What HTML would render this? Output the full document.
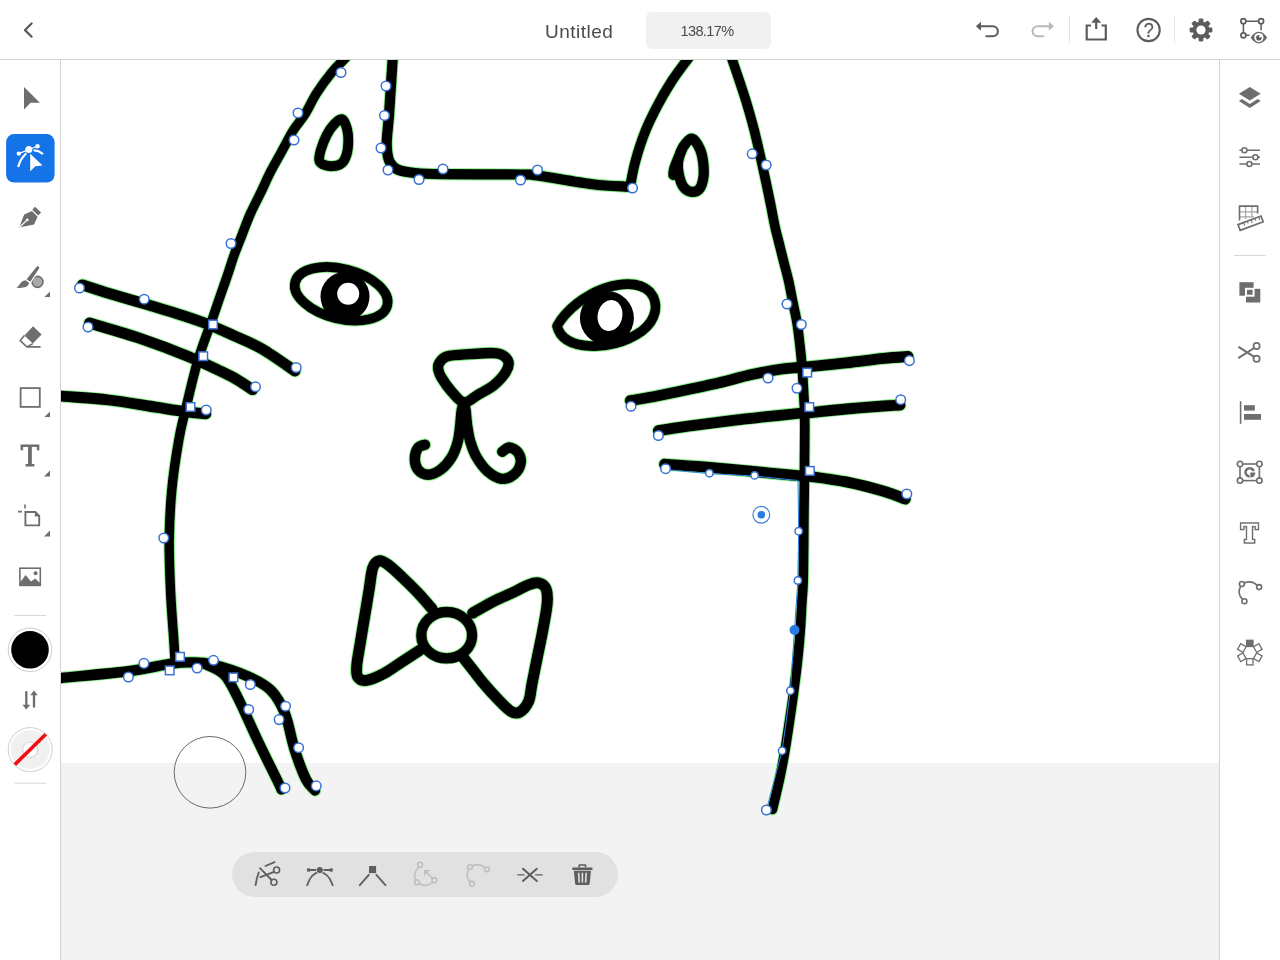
<!DOCTYPE html>
<html lang="en">
<head>
<meta charset="utf-8">
<title>Untitled</title>
<style>
  html, body { margin: 0; padding: 0; }
  body { width: 1280px; height: 960px; overflow: hidden; background: #fff; position: relative;
         font-family: "Liberation Sans", sans-serif; color: #4b4b4b; }
  .topbar { position: absolute; left: 0; top: 0; width: 1280px; height: 59px; background: #fff;
            border-bottom: 1px solid #d3d3d3; z-index: 5; }
  .title { position: absolute; left: 545.3px; top: 19.8px; font-size: 19px; line-height: 24px; letter-spacing: 0.5px; color: #4b4b4b; }
  .zoom { position: absolute; left: 645.7px; top: 11.6px; width: 122px; padding-right: 3px; height: 37.2px; border-radius: 6px;
          background: #f1f1f1; font-size: 14.5px; line-height: 38px; text-align: center; letter-spacing: -0.6px; color: #4b4b4b; }
  .lefttools { position: absolute; left: 0; top: 60px; width: 60px; height: 900px; background: #fff;
               border-right: 1px solid #d3d3d3; z-index: 4; }
  .rightpanel { position: absolute; left: 1219px; top: 60px; width: 60px; height: 900px; background: #fff;
               border-left: 1px solid #d3d3d3; z-index: 4; }
  .canvas { position: absolute; left: 61px; top: 60px; width: 1158px; height: 900px; background: #f3f3f3; overflow: hidden; z-index: 1; }
  .artboard { position: absolute; left: 0; top: 0; width: 1158px; height: 703px; background: #fff; }
  .layer { position: absolute; left: 0; top: 0; }
  .ctxbar { position: absolute; left: 232px; top: 852px; width: 385.5px; height: 45px; border-radius: 23px; background: #e1e1e1; z-index: 3; }
  svg { display: block; overflow: visible; }
  .ico { position: absolute; left: 0; top: 0; z-index: 6; pointer-events: none; will-change: transform; }
  .title, .zoom { will-change: transform; }
</style>
</head>
<body>

<div class="canvas">
  <div class="artboard"></div>
  <svg class="layer" width="1158" height="900" viewBox="61 60 1158 900">
    <g fill="none" stroke="#84ee84" stroke-linecap="round" stroke-linejoin="round">
<path d="M355.0 48.0C353.1 50.0 347.1 56.2 343.3 60.2C339.5 64.2 336.5 66.5 332.0 72.1C327.5 77.6 320.8 86.6 316.4 93.5C312.0 100.4 309.2 107.5 305.4 113.6C301.6 119.7 297.4 123.8 293.5 130.0C289.6 136.2 285.9 143.9 282.1 150.8C278.3 157.8 274.2 164.8 270.6 171.7C267.1 178.6 264.1 185.6 260.8 192.5C257.5 199.4 253.7 206.4 250.6 213.3C247.5 220.2 245.0 227.2 242.3 234.2C239.6 241.1 236.7 248.1 234.2 255.0C231.7 261.9 229.7 268.9 227.3 275.8C224.9 282.8 222.4 289.8 220.0 296.7C217.6 303.6 216.6 306.9 212.9 317.5C209.2 328.1 202.6 344.6 198.0 360.0C193.4 375.4 188.7 396.7 185.5 410.0C182.3 423.3 181.0 426.7 178.8 440.0C176.5 453.3 173.3 473.3 171.8 490.0C170.2 506.7 169.5 523.3 169.2 540.0C169.0 556.7 169.8 573.3 170.5 590.0C171.2 606.7 173.0 628.3 173.8 640.0C174.5 651.7 174.8 656.7 175.0 660.0" stroke-width="11.3"/>
<path d="M393.4 48.0C393.3 50.0 393.0 53.7 392.6 60.0C392.2 66.3 391.5 76.8 390.9 86.0C390.3 95.2 389.7 105.9 389.0 115.0C388.3 124.1 387.1 134.2 386.8 140.4C386.5 146.6 386.7 148.4 387.2 152.0C387.7 155.6 388.1 159.1 389.8 162.0C391.5 164.9 393.3 167.7 397.5 169.5C401.7 171.3 407.5 172.2 415.0 173.0C422.5 173.8 425.0 174.0 442.5 174.2C460.0 174.5 504.2 174.3 520.0 174.5C535.8 174.7 525.4 173.9 537.5 175.5C549.6 177.1 577.1 182.4 592.5 184.2C607.9 186.1 623.8 186.3 630.0 186.8" stroke-width="12.1"/>
<path d="M630.0 187.0C630.9 182.8 632.7 171.2 635.2 162.0C637.7 152.8 641.3 141.3 645.0 132.0C648.7 122.7 652.9 114.4 657.3 106.0C661.7 97.6 666.5 89.2 671.5 81.5C676.5 73.8 682.8 65.6 687.0 60.0C691.2 54.4 694.9 50.0 696.5 48.0" stroke-width="11.7"/>
<path d="M728.1 48.0C728.8 50.0 730.4 54.5 732.3 60.0C734.2 65.5 737.1 73.8 739.4 80.8C741.7 87.8 744.1 94.8 746.2 101.7C748.3 108.7 750.3 115.6 752.2 122.5C754.1 129.4 755.8 136.4 757.4 143.3C759.0 150.2 760.6 157.2 762.1 164.2C763.6 171.1 765.1 178.1 766.6 185.0C768.1 191.9 769.5 198.9 770.9 205.8C772.3 212.8 773.6 220.3 775.0 226.7C776.4 233.1 777.9 238.3 779.3 244.0C780.7 249.7 781.9 254.5 783.5 260.8C785.1 267.1 787.2 274.8 788.8 281.7C790.3 288.6 791.5 295.6 792.9 302.5C794.3 309.4 796.0 316.4 797.1 323.3C798.2 330.2 799.0 337.2 799.8 344.2C800.6 351.1 801.3 358.1 801.9 365.0C802.5 371.9 802.9 378.9 803.3 385.8C803.7 392.8 804.1 399.8 804.4 406.7C804.6 413.6 804.8 419.9 804.8 427.5C804.8 435.1 804.7 443.9 804.6 452.5C804.5 461.1 804.5 469.6 804.4 479.0C804.3 488.4 804.1 500.1 804.0 508.8C803.9 517.4 803.9 518.6 803.8 530.6C803.7 542.6 803.5 569.4 803.2 581.0C802.9 592.6 802.5 591.8 802.0 600.0C801.5 608.2 801.0 620.0 800.3 630.0C799.6 640.0 798.7 649.7 797.6 659.9C796.5 670.1 795.1 681.0 793.8 691.0C792.5 701.0 791.2 709.8 789.7 719.8C788.2 729.8 786.6 740.9 784.9 750.9C783.2 760.9 781.5 769.9 779.4 779.7C777.3 789.5 773.6 804.5 772.5 809.5" stroke-width="11.5"/>
<path d="M342.1 119.2C344.2 120.0 346.1 125.4 347.1 129.2C348.1 132.9 348.4 137.5 348.3 141.7C348.2 145.9 347.8 150.6 346.7 154.2C345.6 157.8 344.1 161.3 341.7 163.3C339.3 165.3 335.7 166.1 332.5 166.2C329.3 166.4 324.7 165.2 322.5 164.2C320.3 163.2 319.5 162.4 319.2 160.0C318.9 157.6 319.6 154.2 320.8 150.0C322.1 145.8 324.5 139.3 326.7 135.0C328.9 130.7 331.6 126.8 334.2 124.2C336.8 121.6 340.0 118.4 342.1 119.2Z" stroke-width="11.7"/>
<path d="M692.5 138.8C694.9 139.7 698.2 145.1 700.0 149.2C701.8 153.3 702.8 158.5 703.3 163.3C703.8 168.2 704.0 174.0 703.3 178.3C702.6 182.6 701.3 187.0 699.2 189.2C697.1 191.4 693.4 192.1 690.8 191.7C688.1 191.3 685.3 189.6 683.3 186.7C681.3 183.8 679.6 178.1 678.8 174.2C677.9 170.3 677.6 167.1 677.9 163.3C678.2 159.6 679.5 155.0 680.8 151.7C682.1 148.4 683.8 145.5 685.8 143.3C687.8 141.1 690.1 137.8 692.5 138.8Z" stroke-width="12.1"/>
<path d="M681.7 150.0C680.9 151.9 678.0 158.4 676.7 161.7C675.4 165.0 674.3 167.8 673.8 170.0C673.2 172.2 673.4 174.2 673.3 175.0" stroke-width="11.9"/>
<path d="M82.3 284.8C86.7 286.2 99.3 290.4 108.9 293.4C118.5 296.3 129.7 299.4 140.1 302.5C150.5 305.6 161.0 308.6 171.4 311.9C181.8 315.2 192.2 318.4 202.6 322.3C213.0 326.2 224.0 331.2 233.9 335.6C243.8 340.0 251.8 343.0 262.0 348.9C272.2 354.8 289.5 367.3 295.0 371.0" stroke-width="12.7"/>
<path d="M89.5 323.0C97.9 325.6 123.8 332.9 140.1 338.4C156.3 343.9 174.0 350.6 187.0 355.9C200.0 361.2 210.1 366.1 218.2 370.0C226.4 373.9 230.3 375.7 236.0 379.0C241.7 382.3 249.8 387.9 252.5 389.7" stroke-width="12.7"/>
<path d="M40.0 395.0C43.7 395.2 50.5 395.4 62.0 396.2C73.5 397.1 93.3 398.2 108.9 400.0C124.5 401.8 142.7 405.2 155.8 407.2C168.8 409.2 178.7 410.8 187.0 411.9C195.3 413.0 202.6 413.4 205.8 413.8" stroke-width="12.7"/>
<path d="M630.3 400.6C634.7 399.8 647.3 397.9 656.9 396.0C666.5 394.1 677.7 391.7 688.1 389.5C698.5 387.3 709.0 385.2 719.4 382.8C729.8 380.4 740.2 377.1 750.6 374.8C761.0 372.5 774.1 370.2 781.9 369.0C789.7 367.8 793.0 367.9 797.5 367.5C802.0 367.1 800.6 367.4 808.8 366.6C816.9 365.8 833.8 364.3 846.2 362.9C858.8 361.5 873.4 359.5 883.8 358.4C894.1 357.3 904.0 356.8 908.1 356.5" stroke-width="12.7"/>
<path d="M658.4 430.7C663.4 429.9 675.3 428.0 688.1 426.2C700.9 424.4 722.0 421.7 735.0 420.1C748.0 418.5 755.8 417.8 766.2 416.7C776.7 415.6 790.4 414.2 797.5 413.5C804.6 412.8 800.6 413.5 808.8 412.8C816.9 412.0 833.8 410.1 846.2 409.0C858.8 407.9 874.8 406.6 883.8 406.0C892.7 405.4 897.3 405.2 900.0 405.1" stroke-width="12.7"/>
<path d="M664.5 464.2C671.0 464.6 689.4 465.7 703.8 466.9C718.1 468.1 735.0 469.8 750.6 471.2C766.2 472.7 787.8 474.8 797.5 475.6C807.2 476.4 800.6 475.2 808.8 476.3C816.9 477.4 833.8 479.4 846.2 481.9C858.8 484.4 873.9 488.4 883.8 491.3C893.6 494.2 901.7 497.7 905.3 499.0" stroke-width="12.7"/>
<path d="M439.1 363.4C440.5 361.2 441.7 357.9 446.9 356.4C452.1 354.8 462.0 354.6 470.3 354.1C478.6 353.6 490.6 352.3 496.9 353.3C503.1 354.3 506.2 357.3 507.8 360.3C509.4 363.3 508.6 367.1 506.2 371.2C503.9 375.4 498.4 381.4 493.8 385.3C489.1 389.2 483.0 391.8 478.1 394.7C473.2 397.6 468.5 403.0 464.1 402.5C459.7 402.0 455.4 395.8 451.6 391.6C447.8 387.4 443.6 381.1 441.4 377.5C439.2 373.9 438.7 372.1 438.3 369.7C437.9 367.3 437.7 365.6 439.1 363.4Z" stroke-width="12.3"/>
<path d="M464.1 402.5C463.7 403.8 462.4 406.4 461.7 410.3C461.0 414.2 460.8 420.7 460.2 425.9C459.6 431.1 459.2 436.4 457.8 441.6C456.4 446.8 454.5 452.5 451.6 457.2C448.7 461.9 444.5 466.8 440.6 469.7C436.7 472.6 431.9 474.7 428.1 474.7C424.3 474.7 420.2 472.4 418.0 469.7C415.8 467.0 414.8 462.4 414.8 458.8C414.8 455.1 416.3 450.1 418.0 447.8C419.7 445.5 423.8 445.2 425.0 444.7" stroke-width="12.3"/>
<path d="M464.1 402.5C464.4 403.8 465.1 406.4 465.6 410.3C466.1 414.2 466.4 420.7 467.2 425.9C468.0 431.1 468.7 436.4 470.3 441.6C471.9 446.8 473.7 452.3 476.6 457.2C479.5 462.1 483.3 467.7 487.5 471.2C491.7 474.8 497.2 478.2 501.6 478.8C506.0 479.3 510.9 477.0 514.1 474.4C517.3 471.8 520.0 467.0 520.6 463.4C521.2 459.8 519.9 455.1 518.0 452.5C516.1 449.9 512.0 447.6 509.4 447.5C506.8 447.4 503.5 451.0 502.3 451.7" stroke-width="12.3"/>
<path d="M432.0 608.7C429.6 606.1 422.9 598.1 417.9 592.8C412.9 587.5 406.9 581.6 401.9 576.9C396.9 572.2 391.6 567.2 387.8 564.5C384.0 561.8 381.4 560.3 378.9 560.9C376.4 561.5 374.3 563.3 372.7 568.0C371.1 572.7 370.5 581.2 369.2 589.2C367.9 597.2 366.3 606.9 364.8 615.8C363.3 624.6 361.7 634.0 360.4 642.3C359.1 650.6 357.2 659.6 356.8 665.4C356.4 671.2 356.1 674.4 357.7 676.9C359.3 679.4 362.1 681.0 366.5 680.4C370.9 679.8 378.3 676.4 384.2 673.3C390.1 670.2 396.0 665.6 401.9 661.8C407.8 658.0 416.7 652.2 419.6 650.3" stroke-width="12.9"/>
<path d="M472.7 613.1C476.1 611.2 486.2 605.1 493.1 601.6C500.0 598.1 508.4 594.7 514.3 591.9C520.2 589.1 524.4 586.3 528.5 584.8C532.6 583.3 536.1 582.3 539.1 583.0C542.1 583.7 544.9 585.7 546.2 589.2C547.5 592.7 547.7 597.3 547.1 604.2C546.5 611.1 544.3 621.9 542.7 630.8C541.1 639.6 539.1 648.4 537.3 657.3C535.5 666.1 533.5 676.5 532.0 683.9C530.5 691.3 530.6 696.9 528.5 701.6C526.4 706.3 522.6 710.6 519.6 712.2C516.6 713.8 514.3 713.4 510.8 711.3C507.3 709.2 503.1 704.7 498.4 699.8C493.7 694.9 487.2 687.7 482.5 682.1C477.8 676.5 473.4 670.3 470.1 666.2C466.9 662.1 464.2 658.8 463.0 657.3" stroke-width="12.9"/>
<path d="M40.0 680.0C43.3 679.7 44.9 679.5 60.0 678.0C75.0 676.5 112.0 673.4 130.3 671.0C148.7 668.6 159.9 665.2 170.1 663.8C180.2 662.4 184.2 662.3 191.2 662.4C198.2 662.5 202.9 662.2 212.3 664.5C221.7 666.8 237.7 671.9 247.5 676.2C257.3 680.5 264.6 684.0 270.9 690.3C277.1 696.5 281.1 703.9 285.0 713.7C288.9 723.5 290.9 738.0 294.4 748.9C297.9 759.8 302.6 772.5 306.0 779.4C309.4 786.3 313.5 788.6 315.0 790.5" stroke-width="12.3"/>
<path d="M205.0 664.0C208.2 665.8 218.6 669.0 224.0 674.5C229.4 680.0 231.9 686.1 237.6 697.3C243.3 708.5 251.5 727.4 258.4 741.9C265.3 756.4 275.2 776.1 279.0 784.0C282.8 791.9 281.0 788.6 281.4 789.5" stroke-width="12.1"/>
      <ellipse cx="341.2" cy="293.8" rx="47.5" ry="25" transform="rotate(14 341.2 293.8)" stroke-width="11.5"/>
      <path d="M557 326 C566 310 585 295 605 288 C625 282 640 282 650 292 C660 304 656 320 642 331 C625 343 605 347 590 346 C570 345 560 338 557 326Z" stroke-width="11.5"/>
      <ellipse cx="446.7" cy="635.2" rx="25.4" ry="23.2" stroke-width="12.2"/>
    </g>
    <g fill="none" stroke="#000" stroke-linecap="round" stroke-linejoin="round">
<path d="M355.0 48.0C353.1 50.0 347.1 56.2 343.3 60.2C339.5 64.2 336.5 66.5 332.0 72.1C327.5 77.6 320.8 86.6 316.4 93.5C312.0 100.4 309.2 107.5 305.4 113.6C301.6 119.7 297.4 123.8 293.5 130.0C289.6 136.2 285.9 143.9 282.1 150.8C278.3 157.8 274.2 164.8 270.6 171.7C267.1 178.6 264.1 185.6 260.8 192.5C257.5 199.4 253.7 206.4 250.6 213.3C247.5 220.2 245.0 227.2 242.3 234.2C239.6 241.1 236.7 248.1 234.2 255.0C231.7 261.9 229.7 268.9 227.3 275.8C224.9 282.8 222.4 289.8 220.0 296.7C217.6 303.6 216.6 306.9 212.9 317.5C209.2 328.1 202.6 344.6 198.0 360.0C193.4 375.4 188.7 396.7 185.5 410.0C182.3 423.3 181.0 426.7 178.8 440.0C176.5 453.3 173.3 473.3 171.8 490.0C170.2 506.7 169.5 523.3 169.2 540.0C169.0 556.7 169.8 573.3 170.5 590.0C171.2 606.7 173.0 628.3 173.8 640.0C174.5 651.7 174.8 656.7 175.0 660.0" stroke-width="9.4"/>
<path d="M393.4 48.0C393.3 50.0 393.0 53.7 392.6 60.0C392.2 66.3 391.5 76.8 390.9 86.0C390.3 95.2 389.7 105.9 389.0 115.0C388.3 124.1 387.1 134.2 386.8 140.4C386.5 146.6 386.7 148.4 387.2 152.0C387.7 155.6 388.1 159.1 389.8 162.0C391.5 164.9 393.3 167.7 397.5 169.5C401.7 171.3 407.5 172.2 415.0 173.0C422.5 173.8 425.0 174.0 442.5 174.2C460.0 174.5 504.2 174.3 520.0 174.5C535.8 174.7 525.4 173.9 537.5 175.5C549.6 177.1 577.1 182.4 592.5 184.2C607.9 186.1 623.8 186.3 630.0 186.8" stroke-width="10.2"/>
<path d="M630.0 187.0C630.9 182.8 632.7 171.2 635.2 162.0C637.7 152.8 641.3 141.3 645.0 132.0C648.7 122.7 652.9 114.4 657.3 106.0C661.7 97.6 666.5 89.2 671.5 81.5C676.5 73.8 682.8 65.6 687.0 60.0C691.2 54.4 694.9 50.0 696.5 48.0" stroke-width="9.8"/>
<path d="M728.1 48.0C728.8 50.0 730.4 54.5 732.3 60.0C734.2 65.5 737.1 73.8 739.4 80.8C741.7 87.8 744.1 94.8 746.2 101.7C748.3 108.7 750.3 115.6 752.2 122.5C754.1 129.4 755.8 136.4 757.4 143.3C759.0 150.2 760.6 157.2 762.1 164.2C763.6 171.1 765.1 178.1 766.6 185.0C768.1 191.9 769.5 198.9 770.9 205.8C772.3 212.8 773.6 220.3 775.0 226.7C776.4 233.1 777.9 238.3 779.3 244.0C780.7 249.7 781.9 254.5 783.5 260.8C785.1 267.1 787.2 274.8 788.8 281.7C790.3 288.6 791.5 295.6 792.9 302.5C794.3 309.4 796.0 316.4 797.1 323.3C798.2 330.2 799.0 337.2 799.8 344.2C800.6 351.1 801.3 358.1 801.9 365.0C802.5 371.9 802.9 378.9 803.3 385.8C803.7 392.8 804.1 399.8 804.4 406.7C804.6 413.6 804.8 419.9 804.8 427.5C804.8 435.1 804.7 443.9 804.6 452.5C804.5 461.1 804.5 469.6 804.4 479.0C804.3 488.4 804.1 500.1 804.0 508.8C803.9 517.4 803.9 518.6 803.8 530.6C803.7 542.6 803.5 569.4 803.2 581.0C802.9 592.6 802.5 591.8 802.0 600.0C801.5 608.2 801.0 620.0 800.3 630.0C799.6 640.0 798.7 649.7 797.6 659.9C796.5 670.1 795.1 681.0 793.8 691.0C792.5 701.0 791.2 709.8 789.7 719.8C788.2 729.8 786.6 740.9 784.9 750.9C783.2 760.9 781.5 769.9 779.4 779.7C777.3 789.5 773.6 804.5 772.5 809.5" stroke-width="9.6"/>
<path d="M342.1 119.2C344.2 120.0 346.1 125.4 347.1 129.2C348.1 132.9 348.4 137.5 348.3 141.7C348.2 145.9 347.8 150.6 346.7 154.2C345.6 157.8 344.1 161.3 341.7 163.3C339.3 165.3 335.7 166.1 332.5 166.2C329.3 166.4 324.7 165.2 322.5 164.2C320.3 163.2 319.5 162.4 319.2 160.0C318.9 157.6 319.6 154.2 320.8 150.0C322.1 145.8 324.5 139.3 326.7 135.0C328.9 130.7 331.6 126.8 334.2 124.2C336.8 121.6 340.0 118.4 342.1 119.2Z" stroke-width="9.8"/>
<path d="M692.5 138.8C694.9 139.7 698.2 145.1 700.0 149.2C701.8 153.3 702.8 158.5 703.3 163.3C703.8 168.2 704.0 174.0 703.3 178.3C702.6 182.6 701.3 187.0 699.2 189.2C697.1 191.4 693.4 192.1 690.8 191.7C688.1 191.3 685.3 189.6 683.3 186.7C681.3 183.8 679.6 178.1 678.8 174.2C677.9 170.3 677.6 167.1 677.9 163.3C678.2 159.6 679.5 155.0 680.8 151.7C682.1 148.4 683.8 145.5 685.8 143.3C687.8 141.1 690.1 137.8 692.5 138.8Z" stroke-width="10.2"/>
<path d="M681.7 150.0C680.9 151.9 678.0 158.4 676.7 161.7C675.4 165.0 674.3 167.8 673.8 170.0C673.2 172.2 673.4 174.2 673.3 175.0" stroke-width="10.0"/>
<path d="M82.3 284.8C86.7 286.2 99.3 290.4 108.9 293.4C118.5 296.3 129.7 299.4 140.1 302.5C150.5 305.6 161.0 308.6 171.4 311.9C181.8 315.2 192.2 318.4 202.6 322.3C213.0 326.2 224.0 331.2 233.9 335.6C243.8 340.0 251.8 343.0 262.0 348.9C272.2 354.8 289.5 367.3 295.0 371.0" stroke-width="10.8"/>
<path d="M89.5 323.0C97.9 325.6 123.8 332.9 140.1 338.4C156.3 343.9 174.0 350.6 187.0 355.9C200.0 361.2 210.1 366.1 218.2 370.0C226.4 373.9 230.3 375.7 236.0 379.0C241.7 382.3 249.8 387.9 252.5 389.7" stroke-width="10.8"/>
<path d="M40.0 395.0C43.7 395.2 50.5 395.4 62.0 396.2C73.5 397.1 93.3 398.2 108.9 400.0C124.5 401.8 142.7 405.2 155.8 407.2C168.8 409.2 178.7 410.8 187.0 411.9C195.3 413.0 202.6 413.4 205.8 413.8" stroke-width="10.8"/>
<path d="M630.3 400.6C634.7 399.8 647.3 397.9 656.9 396.0C666.5 394.1 677.7 391.7 688.1 389.5C698.5 387.3 709.0 385.2 719.4 382.8C729.8 380.4 740.2 377.1 750.6 374.8C761.0 372.5 774.1 370.2 781.9 369.0C789.7 367.8 793.0 367.9 797.5 367.5C802.0 367.1 800.6 367.4 808.8 366.6C816.9 365.8 833.8 364.3 846.2 362.9C858.8 361.5 873.4 359.5 883.8 358.4C894.1 357.3 904.0 356.8 908.1 356.5" stroke-width="10.8"/>
<path d="M658.4 430.7C663.4 429.9 675.3 428.0 688.1 426.2C700.9 424.4 722.0 421.7 735.0 420.1C748.0 418.5 755.8 417.8 766.2 416.7C776.7 415.6 790.4 414.2 797.5 413.5C804.6 412.8 800.6 413.5 808.8 412.8C816.9 412.0 833.8 410.1 846.2 409.0C858.8 407.9 874.8 406.6 883.8 406.0C892.7 405.4 897.3 405.2 900.0 405.1" stroke-width="10.8"/>
<path d="M664.5 464.2C671.0 464.6 689.4 465.7 703.8 466.9C718.1 468.1 735.0 469.8 750.6 471.2C766.2 472.7 787.8 474.8 797.5 475.6C807.2 476.4 800.6 475.2 808.8 476.3C816.9 477.4 833.8 479.4 846.2 481.9C858.8 484.4 873.9 488.4 883.8 491.3C893.6 494.2 901.7 497.7 905.3 499.0" stroke-width="10.8"/>
<path d="M439.1 363.4C440.5 361.2 441.7 357.9 446.9 356.4C452.1 354.8 462.0 354.6 470.3 354.1C478.6 353.6 490.6 352.3 496.9 353.3C503.1 354.3 506.2 357.3 507.8 360.3C509.4 363.3 508.6 367.1 506.2 371.2C503.9 375.4 498.4 381.4 493.8 385.3C489.1 389.2 483.0 391.8 478.1 394.7C473.2 397.6 468.5 403.0 464.1 402.5C459.7 402.0 455.4 395.8 451.6 391.6C447.8 387.4 443.6 381.1 441.4 377.5C439.2 373.9 438.7 372.1 438.3 369.7C437.9 367.3 437.7 365.6 439.1 363.4Z" stroke-width="10.4"/>
<path d="M464.1 402.5C463.7 403.8 462.4 406.4 461.7 410.3C461.0 414.2 460.8 420.7 460.2 425.9C459.6 431.1 459.2 436.4 457.8 441.6C456.4 446.8 454.5 452.5 451.6 457.2C448.7 461.9 444.5 466.8 440.6 469.7C436.7 472.6 431.9 474.7 428.1 474.7C424.3 474.7 420.2 472.4 418.0 469.7C415.8 467.0 414.8 462.4 414.8 458.8C414.8 455.1 416.3 450.1 418.0 447.8C419.7 445.5 423.8 445.2 425.0 444.7" stroke-width="10.4"/>
<path d="M464.1 402.5C464.4 403.8 465.1 406.4 465.6 410.3C466.1 414.2 466.4 420.7 467.2 425.9C468.0 431.1 468.7 436.4 470.3 441.6C471.9 446.8 473.7 452.3 476.6 457.2C479.5 462.1 483.3 467.7 487.5 471.2C491.7 474.8 497.2 478.2 501.6 478.8C506.0 479.3 510.9 477.0 514.1 474.4C517.3 471.8 520.0 467.0 520.6 463.4C521.2 459.8 519.9 455.1 518.0 452.5C516.1 449.9 512.0 447.6 509.4 447.5C506.8 447.4 503.5 451.0 502.3 451.7" stroke-width="10.4"/>
<path d="M432.0 608.7C429.6 606.1 422.9 598.1 417.9 592.8C412.9 587.5 406.9 581.6 401.9 576.9C396.9 572.2 391.6 567.2 387.8 564.5C384.0 561.8 381.4 560.3 378.9 560.9C376.4 561.5 374.3 563.3 372.7 568.0C371.1 572.7 370.5 581.2 369.2 589.2C367.9 597.2 366.3 606.9 364.8 615.8C363.3 624.6 361.7 634.0 360.4 642.3C359.1 650.6 357.2 659.6 356.8 665.4C356.4 671.2 356.1 674.4 357.7 676.9C359.3 679.4 362.1 681.0 366.5 680.4C370.9 679.8 378.3 676.4 384.2 673.3C390.1 670.2 396.0 665.6 401.9 661.8C407.8 658.0 416.7 652.2 419.6 650.3" stroke-width="11.0"/>
<path d="M472.7 613.1C476.1 611.2 486.2 605.1 493.1 601.6C500.0 598.1 508.4 594.7 514.3 591.9C520.2 589.1 524.4 586.3 528.5 584.8C532.6 583.3 536.1 582.3 539.1 583.0C542.1 583.7 544.9 585.7 546.2 589.2C547.5 592.7 547.7 597.3 547.1 604.2C546.5 611.1 544.3 621.9 542.7 630.8C541.1 639.6 539.1 648.4 537.3 657.3C535.5 666.1 533.5 676.5 532.0 683.9C530.5 691.3 530.6 696.9 528.5 701.6C526.4 706.3 522.6 710.6 519.6 712.2C516.6 713.8 514.3 713.4 510.8 711.3C507.3 709.2 503.1 704.7 498.4 699.8C493.7 694.9 487.2 687.7 482.5 682.1C477.8 676.5 473.4 670.3 470.1 666.2C466.9 662.1 464.2 658.8 463.0 657.3" stroke-width="11.0"/>
<path d="M40.0 680.0C43.3 679.7 44.9 679.5 60.0 678.0C75.0 676.5 112.0 673.4 130.3 671.0C148.7 668.6 159.9 665.2 170.1 663.8C180.2 662.4 184.2 662.3 191.2 662.4C198.2 662.5 202.9 662.2 212.3 664.5C221.7 666.8 237.7 671.9 247.5 676.2C257.3 680.5 264.6 684.0 270.9 690.3C277.1 696.5 281.1 703.9 285.0 713.7C288.9 723.5 290.9 738.0 294.4 748.9C297.9 759.8 302.6 772.5 306.0 779.4C309.4 786.3 313.5 788.6 315.0 790.5" stroke-width="10.4"/>
<path d="M205.0 664.0C208.2 665.8 218.6 669.0 224.0 674.5C229.4 680.0 231.9 686.1 237.6 697.3C243.3 708.5 251.5 727.4 258.4 741.9C265.3 756.4 275.2 776.1 279.0 784.0C282.8 791.9 281.0 788.6 281.4 789.5" stroke-width="10.2"/>
      <!-- left eye -->
      <ellipse cx="341.2" cy="293.8" rx="47.5" ry="25" transform="rotate(14 341.2 293.8)" stroke-width="9.6"/>
      <!-- right eye -->
      <path d="M557 326 C566 310 585 295 605 288 C625 282 640 282 650 292 C660 304 656 320 642 331 C625 343 605 347 590 346 C570 345 560 338 557 326Z" stroke-width="9.6"/>
      <!-- bow knot -->
      <ellipse cx="446.7" cy="635.2" rx="25.4" ry="23.2" stroke-width="10.3"/>
    </g>
    <!-- pupils -->
    <circle cx="345" cy="296.5" r="24.5" fill="#000"/>
    <circle cx="348.2" cy="293.8" r="11" fill="#fff"/>
    <ellipse cx="606.9" cy="318" rx="27" ry="27" fill="#000"/>
    <ellipse cx="610" cy="315.6" rx="12.3" ry="15.6" fill="#fff" transform="rotate(12 610 315.6)"/>

    <!-- selection highlight -->
    <path d="M665.6 469.5 L709.4 473.6 L754.6 476 L798 480.5 L798.7 531.2 L797.9 580.5 L794.5 630 L790.4 690.7 L782.1 750.7 L766.4 810" fill="none" stroke="#2f86e8" stroke-width="1"/>

    <!-- anchors -->
    <g fill="#fff" stroke="#3a70d4" stroke-width="1.5">
<circle cx="341.0" cy="72.5" r="4.8"/>
<circle cx="298.0" cy="113.0" r="4.8"/>
<circle cx="294.0" cy="140.0" r="4.8"/>
<circle cx="231.0" cy="243.5" r="4.8"/>
<circle cx="79.5" cy="288.0" r="4.8"/>
<circle cx="144.2" cy="299.2" r="4.8"/>
<circle cx="296.2" cy="367.5" r="4.8"/>
<circle cx="88.0" cy="327.0" r="4.8"/>
<circle cx="255.5" cy="386.8" r="4.8"/>
<circle cx="206.2" cy="410.0" r="4.8"/>
<circle cx="163.8" cy="538.0" r="4.8"/>
<circle cx="386.0" cy="86.0" r="4.8"/>
<circle cx="384.5" cy="115.5" r="4.8"/>
<circle cx="381.0" cy="148.0" r="4.8"/>
<circle cx="388.0" cy="170.0" r="4.8"/>
<circle cx="419.0" cy="179.5" r="4.8"/>
<circle cx="443.0" cy="169.0" r="4.8"/>
<circle cx="520.5" cy="180.0" r="4.8"/>
<circle cx="537.5" cy="170.0" r="4.8"/>
<circle cx="632.5" cy="188.0" r="4.8"/>
<circle cx="752.2" cy="153.8" r="4.8"/>
<circle cx="766.2" cy="165.0" r="4.8"/>
<circle cx="787.0" cy="304.0" r="4.8"/>
<circle cx="801.3" cy="324.5" r="4.8"/>
<circle cx="631.0" cy="406.3" r="4.8"/>
<circle cx="768.0" cy="378.0" r="4.8"/>
<circle cx="909.4" cy="360.6" r="4.8"/>
<circle cx="658.4" cy="435.5" r="4.8"/>
<circle cx="900.7" cy="399.7" r="4.8"/>
<circle cx="797.0" cy="388.3" r="4.8"/>
<circle cx="665.6" cy="468.7" r="4.8"/>
<circle cx="906.8" cy="494.0" r="4.8"/>
<circle cx="128.4" cy="677.0" r="4.8"/>
<circle cx="143.9" cy="663.4" r="4.8"/>
<circle cx="197.1" cy="668.0" r="4.8"/>
<circle cx="213.5" cy="660.3" r="4.8"/>
<circle cx="250.3" cy="684.5" r="4.8"/>
<circle cx="248.7" cy="709.5" r="4.8"/>
<circle cx="285.5" cy="706.2" r="4.8"/>
<circle cx="279.1" cy="719.6" r="4.8"/>
<circle cx="298.6" cy="747.7" r="4.8"/>
<circle cx="285.0" cy="788.0" r="4.8"/>
<circle cx="316.2" cy="785.9" r="4.8"/>
<circle cx="766.4" cy="810.0" r="4.8"/>
<circle cx="709.4" cy="473.2" r="3.7"/>
<circle cx="754.6" cy="475.4" r="3.7"/>
<circle cx="798.7" cy="531.2" r="3.7"/>
<circle cx="797.9" cy="580.5" r="3.7"/>
<circle cx="790.4" cy="690.7" r="3.7"/>
<circle cx="782.1" cy="750.7" r="3.7"/>
<rect x="208.7" y="320.2" width="8.6" height="8.6"/>
<rect x="198.9" y="351.9" width="8.6" height="8.6"/>
<rect x="186.2" y="402.7" width="8.6" height="8.6"/>
<rect x="802.9" y="368.3" width="8.6" height="8.6"/>
<rect x="805.0" y="402.8" width="8.6" height="8.6"/>
<rect x="805.5" y="466.6" width="8.6" height="8.6"/>
<rect x="165.4" y="666.1" width="8.6" height="8.6"/>
<rect x="175.7" y="652.5" width="8.6" height="8.6"/>
<rect x="229.1" y="673.1" width="8.6" height="8.6"/>
    </g>
    <circle cx="794.5" cy="630" r="5" fill="#2c7be5"/>
    <circle cx="761.3" cy="514.8" r="8.4" fill="#fff" stroke="#3f7edb" stroke-width="1.2"/>
    <circle cx="761.3" cy="514.8" r="3.8" fill="#2c7be5"/>

    <!-- touch shortcut circle -->
    <circle cx="210" cy="772.3" r="35.8" fill="none" stroke="#6a6a6a" stroke-width="1"/>
  </svg>
</div>

<div class="ctxbar"></div>

<div class="topbar">
  <div class="title">Untitled</div>
  <div class="zoom">138.17%</div>
</div>
<div class="lefttools"></div>
<div class="rightpanel"></div>

<!-- all icons drawn in page coordinates -->
<svg class="ico" width="1280" height="960" viewBox="0 0 1280 960">
  <!-- ===== top bar ===== -->
  <g fill="none" stroke="#595959" stroke-width="2.2" stroke-linecap="round" stroke-linejoin="round">
    <path d="M31.6 23.4 L25 30.1 L31.6 36.7"/>
  </g>
  <!-- undo -->
  <g fill="none" stroke="#5c5c5c" stroke-width="2.1" stroke-linecap="round">
    <path d="M980.5 26.2 H992.8 A5 5 0 0 1 992.8 36.3 H986.4"/>
  </g>
  <path d="M975.9 26.2 L981 21.7 V30.7Z" fill="#5c5c5c"/>
  <!-- redo -->
  <g fill="none" stroke="#b9b9b9" stroke-width="2.1" stroke-linecap="round">
    <path d="M1049 26.2 H1037.6 A5 5 0 0 0 1037.6 36.3 H1043.2"/>
  </g>
  <path d="M1053.9 26.2 L1048.8 21.7 V30.7Z" fill="#b9b9b9"/>
  <path d="M1069.5 16 V43" stroke="#e3e3e3" stroke-width="1"/>
  <!-- share -->
  <g fill="none" stroke="#5c5c5c" stroke-width="2.2">
    <path d="M1091 25.5 H1086.7 V39.5 H1105.8 V25.5 H1101.5"/>
    <path d="M1096.2 21 V29"/>
  </g>
  <path d="M1096.2 17 L1101.2 22.8 H1091.2Z" fill="#5c5c5c"/>
  <!-- help -->
  <circle cx="1148.6" cy="30" r="11.15" fill="none" stroke="#5c5c5c" stroke-width="2.1"/>
  <text transform="translate(1148.8 37) scale(0.92 1)" x="0" y="0" font-family="Liberation Sans, sans-serif" font-size="19.6" text-anchor="middle" fill="#5c5c5c" stroke="#5c5c5c" stroke-width="0.3">?</text>
  <path d="M1174.5 16 V43" stroke="#e3e3e3" stroke-width="1"/>
  <!-- gear -->
  <g transform="translate(1201 30)" fill="#5c5c5c">
    <g id="teeth">
      <rect x="-2.4" y="-11.4" width="4.8" height="22.8" rx="1.1"/>
      <rect x="-2.4" y="-11.4" width="4.8" height="22.8" rx="1.1" transform="rotate(45)"/>
      <rect x="-2.4" y="-11.4" width="4.8" height="22.8" rx="1.1" transform="rotate(90)"/>
      <rect x="-2.4" y="-11.4" width="4.8" height="22.8" rx="1.1" transform="rotate(135)"/>
    </g>
    <circle r="8.4"/>
    <circle r="4.6" fill="#fff"/>
  </g>
  <!-- artboard preview (nodes + eye) -->
  <g fill="none" stroke="#5c5c5c" stroke-width="1.7">
    <path stroke-width="1.5" d="M1246 21.2 H1258.5 M1243.4 23.8 V32.6 M1261.1 23.8 V30.3 M1246 35.3 H1249.6"/>
    <circle cx="1243.4" cy="21.2" r="2.5" fill="#fff"/>
    <circle cx="1261.1" cy="21.2" r="2.5" fill="#fff"/>
    <circle cx="1243.4" cy="35.3" r="2.5" fill="#fff"/>
  </g>
  <path d="M1250.6 37.6 C1253.4 33.4 1256.2 31.7 1258.9 31.7 C1261.6 31.7 1264.4 33.4 1267.2 37.6 C1264.4 41.8 1261.6 43.5 1258.9 43.5 C1256.2 43.5 1253.4 41.8 1250.6 37.6Z" fill="#666"/>
  <circle cx="1258.9" cy="37.6" r="4.6" fill="#fff"/>
  <circle cx="1258.9" cy="37.7" r="2.8" fill="#5c5c5c"/>
  <circle cx="1260.3" cy="36.3" r="1.2" fill="#fff"/>

  <!-- ===== left tools ===== -->
  <path d="M24 87 V109.6 L30.6 102.8 H39.9Z" fill="#6e6e6e"/>
  <rect x="6.1" y="134.1" width="48.5" height="48.5" rx="8" fill="#1473e6"/>
  <!-- direct selection (white) -->
  <g fill="none" stroke="#fff" stroke-width="2.2" stroke-linecap="round">
    <path d="M18.8 153.6 L28.8 149.5 L37.5 146.3" stroke-width="1.2"/>
    <path d="M25.6 154 C21.9 157.6 19.6 161.8 18.4 166.2"/>
    <path d="M34.4 150.4 C37.6 150.6 40.2 151.8 42.3 153.6"/>
  </g>
  <circle cx="28.8" cy="149.5" r="3.5" fill="#fff"/>
  <circle cx="18.8" cy="153.6" r="2.2" fill="#fff"/>
  <circle cx="37.5" cy="146.3" r="2.2" fill="#fff"/>
  <path d="M30.2 153.8 V171.6 L35.3 166.2 L42.6 165.6Z" fill="#fff"/>
  <!-- pen -->
  <g fill="#6e6e6e">
    <path d="M19.2 227.6 L24.2 214.6 L31.9 211 L37.6 216.8 L34 224.5Z"/>
    <path d="M32.3 209.7 L35 206.8 L41.1 212.6 L38.2 215.6Z"/>
  </g>
  <path d="M19.6 227.2 L26.6 220.4" stroke="#fff" stroke-width="1.3" fill="none"/>
  <circle cx="27.2" cy="219.9" r="1.4" fill="#fff"/>
  <!-- brush -->
  <g fill="#6e6e6e">
    <path d="M38.6 266.4 C39.6 267 39.4 268.6 38.6 269.8 L30.6 282 L26.6 279.2 L36 267.4 C36.8 266.4 37.8 266 38.6 266.4Z"/>
    <path d="M25.6 280.2 L29.3 283 C28.3 286.6 24.5 288.4 16 287.8 C19.6 286.6 19.6 281 25.6 280.2Z"/>
  </g>
  <circle cx="37.5" cy="281.9" r="5.5" fill="#a9a9a9" stroke="#6e6e6e" stroke-width="1.6"/>
  <path d="M29.2 284.5 L40.4 267.8" stroke="#fff" stroke-width="1.3" fill="none"/>
  <path d="M44.4 296.9 L50 291.4 V296.9Z" fill="#6e6e6e"/>
  <!-- eraser -->
  <path d="M33.1 326.2 L41.6 334.4 L32.8 343.6 L24.4 335.6Z" fill="#6e6e6e"/>
  <path d="M24.4 335.6 L20.2 340.6 L26.9 346.9 L32.8 343.6 M26.9 346.9 H40.6" fill="none" stroke="#6e6e6e" stroke-width="1.6" stroke-linejoin="round"/>
  <!-- rectangle -->
  <rect x="20.6" y="388.1" width="19.2" height="18.8" fill="none" stroke="#6e6e6e" stroke-width="1.8"/>
  <path d="M44.4 416.9 L50 411.4 V416.9Z" fill="#6e6e6e"/>
  <!-- type -->
  <text x="30" y="465.9" font-family="DejaVu Serif, Liberation Serif, serif" font-size="27.6" text-anchor="middle" fill="#6e6e6e" stroke="#6e6e6e" stroke-width="0.9">T</text>
  <path d="M44 476.6 L50 470.6 V476.6Z" fill="#6e6e6e"/>
  <!-- artboard -->
  <path d="M25.4 512 H35.4 L39.2 516 V525.4 H25.4Z" fill="none" stroke="#6e6e6e" stroke-width="1.9"/>
  <path d="M34.8 511.4 L39.8 516.6 H34.8Z" fill="#6e6e6e"/>
  <path d="M25 504.4 V508.6 M17.9 511.6 H21.9" stroke="#6e6e6e" stroke-width="1.6" fill="none"/>
  <path d="M44 536.6 L50 530.6 V536.6Z" fill="#6e6e6e"/>
  <!-- image -->
  <rect x="19.9" y="568.2" width="20.4" height="17.2" fill="none" stroke="#6e6e6e" stroke-width="1.6"/>
  <path d="M20 582.4 L25.6 575 L31 581.6 L35.2 578.4 L40 583 V585.4 H20Z" fill="#6e6e6e"/>
  <circle cx="35.6" cy="573.2" r="2" fill="#6e6e6e"/>
  <path d="M14.4 615.5 H46.3" stroke="#d6d6d6" stroke-width="1"/>
  <!-- fill -->
  <circle cx="30" cy="649.8" r="21.8" fill="#fff" stroke="#cfcfcf" stroke-width="1"/>
  <circle cx="30" cy="649.8" r="18.8" fill="#000"/>
  <!-- swap -->
  <g stroke="#6e6e6e" stroke-width="2.3" fill="none">
    <path d="M26.3 691.2 V706"/>
    <path d="M34 694 V707.6"/>
  </g>
  <path d="M22.4 704.8 H30.2 L26.3 709.4Z M30.2 695.2 H37.8 L34 690.4Z" fill="#6e6e6e"/>
  <!-- stroke none -->
  <circle cx="30.2" cy="749.6" r="22" fill="#fff" stroke="#cfcfcf" stroke-width="1"/>
  <circle cx="30.2" cy="749.6" r="19.4" fill="#f0f0f0"/>
  <circle cx="30.2" cy="749.6" r="7.6" fill="#fff" stroke="#cfcfcf" stroke-width="1"/>
  <path d="M14.8 764.6 L45.8 734.2" stroke="#f00f14" stroke-width="3.6" fill="none"/>
  <path d="M14.4 783.2 H46.3" stroke="#d6d6d6" stroke-width="1"/>

  <!-- ===== right panel ===== -->
  <!-- layers -->
  <path d="M1249.8 86.9 L1260.7 93.8 L1249.8 100.6 L1238.9 93.8Z" fill="#6e6e6e"/>
  <path d="M1238.9 100.9 L1241.9 99 L1249.8 104 L1257.7 99 L1260.7 100.9 L1249.8 108.1Z" fill="#6e6e6e"/>
  <!-- properties -->
  <g stroke="#6e6e6e" stroke-width="1.6" fill="#fff">
    <path d="M1239.4 150.3 H1260 M1239.4 157.3 H1260 M1239.4 164 H1260"/>
    <circle cx="1244.4" cy="150.3" r="2.5"/>
    <circle cx="1255.4" cy="157.3" r="2.5"/>
    <circle cx="1249.4" cy="164" r="2.5"/>
  </g>
  <!-- grid + ruler -->
  <g fill="none">
    <path d="M1245.6 206 V219 M1251.9 206 V217 M1239.5 211.9 H1257.6 M1239.5 216.9 H1254" stroke="#a5a5a5" stroke-width="1.2"/>
    <path d="M1239.5 220.4 V206.1 H1257.6 V213.4" stroke="#6e6e6e" stroke-width="1.6"/>
    <path d="M1238 224.6 L1261 216 L1263.2 221.8 L1240.2 230.4Z" stroke="#6e6e6e" stroke-width="1.7" fill="#fff"/>
    <path d="M1243.6 222.8 L1244.7 225.6 M1247.4 221.4 L1248.2 223.4 M1251.2 220 L1252.3 222.8 M1255 218.6 L1255.8 220.6 M1258.8 217.2 L1259.9 220" stroke="#6e6e6e" stroke-width="1.1"/>
  </g>
  <path d="M1233.8 255.5 H1265.6" stroke="#d6d6d6" stroke-width="1"/>
  <!-- pathfinder -->
  <rect x="1239.4" y="282.2" width="14.2" height="13.5" fill="#6e6e6e"/>
  <rect x="1246" y="288.8" width="14.3" height="13.7" fill="#6e6e6e"/>
  <rect x="1246" y="288.8" width="7.6" height="6.9" fill="#6e6e6e" stroke="#fff" stroke-width="2"/>
  <!-- scissors -->
  <g fill="none" stroke="#6e6e6e" stroke-width="1.7" stroke-linecap="round">
    <circle cx="1256.6" cy="346" r="3.1"/>
    <circle cx="1256.6" cy="358.8" r="3.1"/>
    <path d="M1254.2 348 L1239 357.6 M1254.2 356.8 L1239 347.2" stroke-width="2"/>
  </g>
  <!-- align -->
  <path d="M1240.6 401.2 V423.8" stroke="#6e6e6e" stroke-width="1.6"/>
  <rect x="1244" y="405.2" width="10.8" height="5.4" fill="#6e6e6e"/>
  <rect x="1244" y="414" width="17" height="5.8" fill="#6e6e6e"/>
  <!-- object -->
  <g fill="#fff" stroke="#6e6e6e" stroke-width="1.6">
    <rect x="1240" y="464" width="19.4" height="16.6" fill="none"/>
    <circle cx="1240" cy="464" r="2.7"/><circle cx="1259.4" cy="464" r="2.7"/>
    <circle cx="1240" cy="480.6" r="2.7"/><circle cx="1259.4" cy="480.6" r="2.7"/>
  </g>
  <path d="M1249.6 468.2 A4.1 4.1 0 1 0 1249.6 476.4" fill="none" stroke="#6e6e6e" stroke-width="2.5"/>
  <path d="M1249.6 468.2 A4.1 4.1 0 0 1 1253.6 471.2" fill="none" stroke="#6e6e6e" stroke-width="2.5"/>
  <path d="M1250.4 472.6 H1255.4 A5 5 0 0 1 1250.4 477.6Z" fill="#6e6e6e"/>
  <!-- type outline -->
  <g transform="translate(1249.4 541.5) scale(0.95 1)" font-family="DejaVu Serif, Liberation Serif, serif" font-weight="bold" font-size="23.4" text-anchor="middle">
    <text x="0" y="0" fill="#6e6e6e" stroke="#6e6e6e" stroke-width="3.4" stroke-linejoin="miter">T</text>
    <text x="0" y="0" fill="#fff" stroke="#fff" stroke-width="0.5" stroke-linejoin="miter">T</text>
  </g>
  <!-- path -->
  <g fill="none" stroke="#6e6e6e" stroke-width="1.6">
    <path d="M1244.2 583 C1249.5 580.8 1254 582 1257.3 585.4"/>
    <path d="M1240.6 586.4 C1238 591.4 1239 596 1242.6 599.4"/>
    <circle cx="1241.9" cy="584" r="2.5" fill="#fff"/>
    <circle cx="1259.1" cy="587.1" r="2.5" fill="#fff"/>
    <circle cx="1244.4" cy="601.2" r="2.5" fill="#fff"/>
  </g>
  <!-- repeat -->
  <g transform="translate(1249.8 652.6)" stroke="#6e6e6e" stroke-width="1.3" fill="#fff">
    <rect x="-3.2" y="-12.3" width="6.4" height="6.2" fill="#6e6e6e"/>
    <rect x="-3.2" y="-12.3" width="6.4" height="6.2" transform="rotate(60)"/>
    <rect x="-3.2" y="-12.3" width="6.4" height="6.2" transform="rotate(120)"/>
    <rect x="-3.2" y="-12.3" width="6.4" height="6.2" transform="rotate(180)"/>
    <rect x="-3.2" y="-12.3" width="6.4" height="6.2" transform="rotate(240)"/>
    <rect x="-3.2" y="-12.3" width="6.4" height="6.2" transform="rotate(300)"/>
  </g>

  <!-- ===== context bar ===== -->
  <g fill="none" stroke="#5e5e5e" stroke-width="1.8" stroke-linecap="round">
    <circle cx="276.6" cy="870" r="3" stroke-width="1.6"/>
    <circle cx="273.9" cy="882.2" r="3" stroke-width="1.6"/>
    <path d="M274.2 871.8 L260.4 877.2 M271.6 880 L260 868.2"/>
    <path d="M255.6 885.2 C256.2 880.4 257.2 876.4 258.8 872.4 M265.4 866 L274.6 862.2"/>
  </g>
  <g fill="none" stroke="#5e5e5e" stroke-width="1.8" stroke-linecap="round">
    <path d="M309 870 H331"/>
    <path d="M307.1 885.2 C309.4 878 313 873 319.8 871.6 C326.6 873 330.4 878 332.7 885.2"/>
  </g>
  <circle cx="319.8" cy="870" r="3.8" fill="#e1e1e1"/>
  <circle cx="319.8" cy="870" r="3.1" fill="#5e5e5e"/>
  <rect x="307" y="868.4" width="3.2" height="3.2" fill="#5e5e5e"/><rect x="329.6" y="868.4" width="3.2" height="3.2" fill="#5e5e5e"/>
  <rect x="369" y="866" width="7.1" height="7.1" fill="#5e5e5e"/>
  <path d="M368.8 874.8 L359.8 885.2 M376.3 874.8 L385.5 885.2" stroke="#5e5e5e" stroke-width="1.8" stroke-linecap="round" fill="none"/>
  <!-- disabled 1 -->
  <g fill="none" stroke="#bcbcbc" stroke-width="1.4" stroke-linecap="round">
    <path d="M418.8 866.8 C414.6 871.4 413.6 876.4 416 880.2"/>
    <path d="M419.2 883.6 C424 886.4 429 885.6 432.6 882.2"/>
    <path d="M432.4 878.4 L425.2 871 M424.8 875 V870.6 H429.2"/>
    <circle cx="420.2" cy="864.7" r="2.4" fill="#e1e1e1"/><circle cx="434.3" cy="880.2" r="2.4" fill="#e1e1e1"/><circle cx="417" cy="882.3" r="2.4" fill="#e1e1e1"/>
  </g>
  <!-- disabled 2 -->
  <g fill="none" stroke="#bcbcbc" stroke-width="1.4" stroke-linecap="round">
    <path d="M472.2 866 C477.4 863.6 481.8 864.8 485.2 867.8"/>
    <path d="M468.6 869.2 C466 874 467 878.6 470.4 882"/>
    <circle cx="470" cy="867" r="2.4" fill="#e1e1e1"/><circle cx="487" cy="869.3" r="2.4" fill="#e1e1e1"/><circle cx="472" cy="883.7" r="2.4" fill="#e1e1e1"/>
  </g>
  <!-- join -->
  <path d="M523 868.7 L536.8 881 M536.8 868.7 L523 881" stroke="#5e5e5e" stroke-width="2" stroke-linecap="round" fill="none"/>
  <path d="M517.4 874.9 H524.6 M535.2 874.9 H542.7" stroke="#5e5e5e" stroke-width="1.1" fill="none"/>
  <!-- trash -->
  <g fill="#5e5e5e">
    <rect x="572.3" y="867.4" width="20.2" height="2.6" rx=".6"/>
    <path d="M578.4 867.6 V865.4 Q578.4 864.2 579.6 864.2 H585.2 Q586.4 864.2 586.4 865.4 V867.6 H584.8 V865.8 H580 V867.6Z"/>
    <path d="M573.8 870.8 H591 L589.6 884 Q589.5 885 588.4 885 H576.4 Q575.3 885 575.2 884Z"/>
  </g>
  <path d="M578.6 872.8 L579.2 882.6 M582.4 872.8 V882.6 M586.2 872.8 L585.6 882.6" stroke="#e1e1e1" stroke-width="1.6" fill="none"/>
</svg>
</body>
</html>
